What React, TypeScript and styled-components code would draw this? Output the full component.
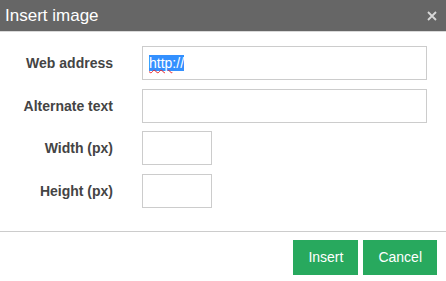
import { FunctionComponent } from 'react'
import { createGlobalStyle, styled } from 'styled-components'

const COLOR_BORDER = '#cccccc'
const COLOR_GREEN = '#28a95e'

const GlobalStyle = createGlobalStyle`
  html, body {
    margin: 0;
    padding: 0;
    background: white;
  }
  body {
    font-family: 'Liberation Sans', Arial, sans-serif;
  }
`

const Dialog = styled.div`
  width: 446px;
  height: 281px;
  background: white;
  overflow: hidden;
  display: flex;
  flex-direction: column;
`

const TitleBar = styled.div`
  height: 31px;
  background: #666666;
  border-bottom: 1px solid #d9d9d9;
  display: flex;
  align-items: center;
  justify-content: space-between;
  padding: 0 8px 0 5px;
`

const Title = styled.h1`
  margin: 0;
  font-size: 17px;
  font-weight: normal;
  color: white;
  line-height: 31px;
`

const CloseButton = styled.button`
  border: 0;
  background: none;
  padding: 0;
  width: 12px;
  height: 12px;
  display: flex;
  align-items: center;
  justify-content: center;
  cursor: pointer;
`

const Form = styled.div`
  display: grid;
  grid-template-columns: 113px 1fr;
  grid-auto-rows: 34px;
  column-gap: 29px;
  row-gap: 8.5px;
  padding: 14px 19px 23px 0;
  border-bottom: 1px solid ${COLOR_BORDER};
`

const Label = styled.label`
  text-align: right;
  font-size: 14px;
  font-weight: bold;
  color: #444444;
  align-self: center;
`

const Field = styled.div<{ $small?: boolean }>`
  box-sizing: border-box;
  height: 34px;
  width: ${(props) => (props.$small ? '70px' : '100%')};
  border: 1px solid ${COLOR_BORDER};
  padding: 0 6px;
  display: flex;
  align-items: center;
  font-size: 14px;
  color: #333;
`

const Selected = styled.span`
  background: #3390ff;
  color: white;
  line-height: 16px;
`

const Misspelled = styled.span`
  text-decoration: underline wavy #e8282c;
  text-decoration-thickness: 1px;
  text-underline-offset: 1px;
`

const Footer = styled.div`
  display: flex;
  justify-content: flex-end;
  gap: 5px;
  padding: 8px 9px 0 0;
`

const Button = styled.button`
  height: 35px;
  padding: 0 15px;
  border: 0;
  background: ${COLOR_GREEN};
  color: white;
  font-family: 'Liberation Sans', Arial, sans-serif;
  font-size: 14px;
  cursor: pointer;
`

const App: FunctionComponent = () => {
  return (
    <>
      <GlobalStyle />
      <Dialog>
        <TitleBar>
          <Title>Insert image</Title>
          <CloseButton aria-label="Close">
            <svg width="10" height="10" viewBox="0 0 10 10">
              <path d="M1 1 L9 9 M9 1 L1 9" stroke="#d8d8d8" strokeWidth="1.8" />
            </svg>
          </CloseButton>
        </TitleBar>
        <Form>
          <Label>Web address</Label>
          <Field>
            <Selected>
              <Misspelled>http</Misspelled>://
            </Selected>
          </Field>
          <Label>Alternate text</Label>
          <Field />
          <Label>Width (px)</Label>
          <Field $small />
          <Label>Height (px)</Label>
          <Field $small />
        </Form>
        <Footer>
          <Button>Insert</Button>
          <Button>Cancel</Button>
        </Footer>
      </Dialog>
    </>
  )
}

export default App
